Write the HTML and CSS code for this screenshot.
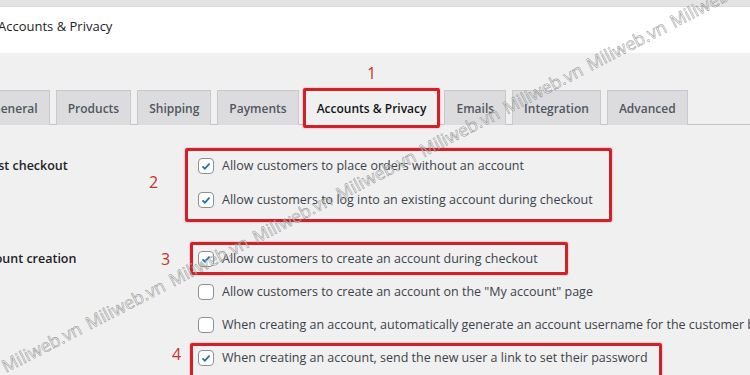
FILE: index.html
```html
<!DOCTYPE html>
<html lang="en">
<head>
    <meta charset="UTF-8">
    <meta name="viewport" content="width=device-width, initial-scale=1.0">
    <title>Accounts &amp; Privacy</title>
    <link rel="stylesheet" href="styles.css">
</head>
<body>
    <div class="topbar"></div>
    <header class="page-head">
        <h1>Accounts &amp; Privacy</h1>
    </header>

    <div class="wrap">
        <nav class="tabs">
            <a class="tab">General</a>
            <a class="tab">Products</a>
            <a class="tab">Shipping</a>
            <a class="tab">Payments</a>
            <a class="tab active">Accounts &amp; Privacy<span class="step step-1">1</span></a>
            <a class="tab">Emails</a>
            <a class="tab">Integration</a>
            <a class="tab">Advanced</a>
        </nav>

        <div class="form">
            <div class="row">
                <div class="row-label">Guest checkout</div>
                <div class="options">
                    <div class="mark mark-2">
                        <span class="step step-2">2</span>
                        <label class="opt">
                            <span class="cb"><svg viewBox="0 0 16 16"><path d="M4 8.3l2.7 2.7L12 5.4"/></svg></span>
                            Allow customers to place orders without an account
                        </label>
                        <label class="opt">
                            <span class="cb"><svg viewBox="0 0 16 16"><path d="M4 8.3l2.7 2.7L12 5.4"/></svg></span>
                            Allow customers to log into an existing account during checkout
                        </label>
                    </div>
                </div>
            </div>

            <div class="row">
                <div class="row-label">Account creation</div>
                <div class="options">
                    <div class="mark mark-3">
                        <span class="step step-3">3</span>
                        <label class="opt">
                            <span class="cb"><svg viewBox="0 0 16 16"><path d="M4 8.3l2.7 2.7L12 5.4"/></svg></span>
                            Allow customers to create an account during checkout
                        </label>
                    </div>
                    <label class="opt">
                        <span class="cb"></span>
                        Allow customers to create an account on the "My account" page
                    </label>
                    <label class="opt">
                        <span class="cb"></span>
                        When creating an account, automatically generate an account username for the customer based on their name, surname or email
                    </label>
                    <div class="mark mark-4">
                        <span class="step step-4">4</span>
                        <label class="opt">
                            <span class="cb"><svg viewBox="0 0 16 16"><path d="M4 8.3l2.7 2.7L12 5.4"/></svg></span>
                            When creating an account, send the new user a link to set their password
                        </label>
                    </div>
                </div>
            </div>
        </div>
    </div>

    <!-- watermark of the source screenshot -->
    <div class="watermark">
        <span>Miliweb.vn</span><span>Miliweb.vn</span><span>Miliweb.vn</span><span>Miliweb.vn</span>
        <span>Miliweb.vn</span><span>Miliweb.vn</span><span>Miliweb.vn</span><span>Miliweb.vn</span>
        <span>Miliweb.vn</span><span>Miliweb.vn</span><span>Miliweb.vn</span><span>Miliweb.vn</span>
    </div>
</body>
</html>
```

FILE: styles.css
```css
html, body {
    margin: 0;
    height: 100%;
    overflow: hidden;
}

body {
    position: relative;
    background-color: #f0f0f1;
    font-family: 'Open Sans', 'Noto Sans', sans-serif;
    font-size: 12.5px;
    color: #3c434a;
}

.topbar {
    height: 6px;
    background-color: #e4e4e4;
    border-bottom: 1px solid #d8d8d8;
}

.page-head {
    box-sizing: border-box;
    height: 46px;
    padding-top: 10px;
    background-color: #fff;
}

.page-head h1 {
    margin: 0 0 0 -2px;
    font-size: 13px;
    line-height: 18px;
    font-weight: 400;
    color: #1d2327;
}

.wrap {
    margin-left: -40px;
}

/* Tabs */
.tabs {
    display: flex;
    gap: 6px;
    height: 34px;
    margin-top: 37px;
    padding-left: 20px;
    border-bottom: 1px solid #c3c4c7;
}

.tab {
    position: relative;
    box-sizing: border-box;
    height: 35px;
    padding: 0 11px;
    display: flex;
    align-items: center;
    background-color: #dcdcde;
    border: 1px solid #c8c9cc;
    border-bottom: none;
    color: #50575e;
    font-size: 12px;
    font-weight: 600;
    white-space: nowrap;
}

.tab.active {
    background-color: #f0f0f1;
    color: #101517;
}

/* red annotation round the active tab */
.tab.active::after {
    content: "";
    position: absolute;
    inset: -3px;
    border: 3px solid #d0212b;
    border-radius: 2px;
    box-shadow: 0 0 2px rgba(208, 33, 43, 0.5);
}

/* Settings rows */
.form {
    padding-top: 32px;
}

.row {
    display: flex;
}

.row + .row {
    margin-top: 42px;
}

.row-label {
    flex: none;
    box-sizing: border-box;
    width: 238px;
    padding-left: 14px;
    line-height: 17px;
    font-weight: 600;
    color: #1d2327;
}

.options {
    display: flex;
    flex-direction: column;
    gap: 16px;
}

.opt {
    display: flex;
    align-items: center;
    gap: 8px;
    height: 17px;
    white-space: nowrap;
}

.cb {
    flex: none;
    box-sizing: border-box;
    width: 16px;
    height: 16px;
    border: 1px solid #8c8f94;
    border-radius: 4px;
    background-color: #fff;
}

.cb svg {
    display: block;
    width: 14px;
    height: 14px;
}

.cb path {
    fill: none;
    stroke: #2271b1;
    stroke-width: 2;
}

/* Red annotation boxes */
.mark {
    position: relative;
    align-self: flex-start;
    display: flex;
    flex-direction: column;
    gap: 16px;
}

.mark-2 {
    gap: 17px;
}

.mark::after {
    content: "";
    position: absolute;
    border: 3px solid #d0212b;
    border-radius: 2px;
    box-shadow: 0 0 2px rgba(208, 33, 43, 0.5);
}

.mark-2::after {
    top: -9px;
    bottom: -14px;
    left: -13px;
    right: -19px;
}

.mark-3::after {
    top: -8px;
    bottom: -8px;
    left: -8px;
    right: -30px;
}

.mark-4::after {
    top: -6px;
    bottom: -30px;
    left: -8px;
    right: -14px;
}

.step {
    position: absolute;
    font-family: 'Open Sans', sans-serif;
    font-size: 16px;
    font-weight: 400;
    line-height: 16px;
    color: #c9302c;
}

.step-1 {
    top: -26px;
    left: 50%;
    transform: translateX(-50%);
}

.step-2 {
    top: 17px;
    left: -49px;
}

.step-3 {
    top: 1px;
    left: -37px;
}

.step-4 {
    top: -3px;
    left: -26px;
}

/* Diagonal watermark */
.watermark {
    position: absolute;
    left: -85px;
    top: 402px;
    display: flex;
    transform-origin: 0 0;
    transform: rotate(-27.3deg);
    font-family: 'Open Sans', sans-serif;
    font-size: 17.5px;
    line-height: 18px;
    white-space: nowrap;
    color: rgba(255, 255, 255, 0.55);
    -webkit-text-stroke: 0.55px rgba(80, 80, 80, 0.6);
    pointer-events: none;
}

.watermark span {
    flex: none;
    width: 94px;
}
```
